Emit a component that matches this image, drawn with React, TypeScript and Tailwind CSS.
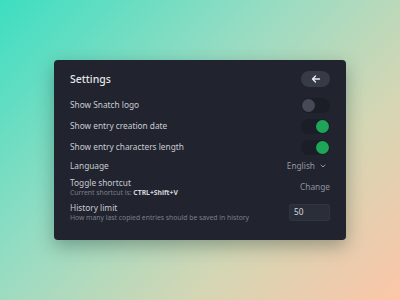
import React from "react";

function Toggle({ on }: { on: boolean }) {
  return (
    <div className="w-[29px] h-[15px] rounded-full bg-[#1b1e26] flex items-center px-px">
      <div
        className={
          on
            ? "ml-auto w-[13px] h-[13px] rounded-full bg-[#1fa55a]"
            : "w-[13px] h-[13px] rounded-full bg-[#464a56]"
        }
      />
    </div>
  );
}

export default function App() {
  return (
    <div
      className="w-[400px] h-[300px] flex items-start justify-center pt-[60px] bg-[linear-gradient(135deg,#3ddec2_0%,#98dcc2_40%,#d4d6b4_70%,#fcc5a8_100%)]"
      style={{ fontFamily: '"Noto Sans", sans-serif' }}
    >
      <div className="w-[292px] h-[180px] rounded-[4px] bg-[#21242e] shadow-[0_6px_18px_rgba(20,40,40,0.35)] px-4 pt-[11px] flex flex-col">
        <div className="h-4 flex items-center justify-between">
          <div className="text-[10.5px] font-medium text-[#e4e6ea] leading-4">Settings</div>
          <div className="w-[29px] h-4 rounded-full bg-[#373b47] flex items-center justify-center">
            <svg width="10" height="10" viewBox="0 0 10 10" fill="none" stroke="#eceef2" strokeWidth="1.3" strokeLinecap="round" strokeLinejoin="round">
              <path d="M8.5 5H1.5M4.5 2L1.5 5L4.5 8" />
            </svg>
          </div>
        </div>
        <div className="mt-[11px] h-[15px] flex items-center justify-between">
          <span className="text-[8.3px] text-[#c8cbd2]">Show Snatch logo</span>
          <Toggle on={false} />
        </div>
        <div className="mt-[6px] h-[15px] flex items-center justify-between">
          <span className="text-[8.3px] text-[#c8cbd2]">Show entry creation date</span>
          <Toggle on={true} />
        </div>
        <div className="mt-[6px] h-[15px] flex items-center justify-between">
          <span className="text-[8.3px] text-[#c8cbd2]">Show entry characters length</span>
          <Toggle on={true} />
        </div>
        <div className="mt-[4px] h-[14px] flex items-center justify-between">
          <span className="text-[8.3px] text-[#c8cbd2]">Language</span>
          <div className="flex items-center gap-[5px] pr-[4px]">
            <span className="text-[8.3px] text-[#9599a3]">English</span>
            <svg width="6" height="4" viewBox="0 0 6 4" fill="none" stroke="#9599a3" strokeWidth="1" strokeLinecap="round" strokeLinejoin="round">
              <path d="M1 1L3 3L5 1" />
            </svg>
          </div>
        </div>
        <div className="mt-[4px] flex items-center justify-between">
          <div className="flex flex-col">
            <span className="text-[8.3px] text-[#c8cbd2] leading-[12px]">Toggle shortcut</span>
            <span className="text-[6.8px] text-[#7b7f8a] leading-[10px] -mt-px">
              Current shortcut is: <span className="font-bold text-[#d4d7dd]">CTRL+Shift+V</span>
            </span>
          </div>
          <span className="text-[8.3px] text-[#8e929c]">Change</span>
        </div>
        <div className="mt-[4px] flex items-center justify-between">
          <div className="flex flex-col">
            <span className="text-[8.3px] text-[#c8cbd2] leading-[12px]">History limit</span>
            <span className="text-[6.8px] text-[#7b7f8a] leading-[10px] -mt-px">
              How many last copied entries should be saved in history
            </span>
          </div>
          <div className="w-[41px] h-[17px] rounded-[2px] bg-[#2a2e38] border border-[#30343e] flex items-center pl-[4px]">
            <span className="text-[8.3px] text-[#d4d7dd]">50</span>
          </div>
        </div>
      </div>
    </div>
  );
}
